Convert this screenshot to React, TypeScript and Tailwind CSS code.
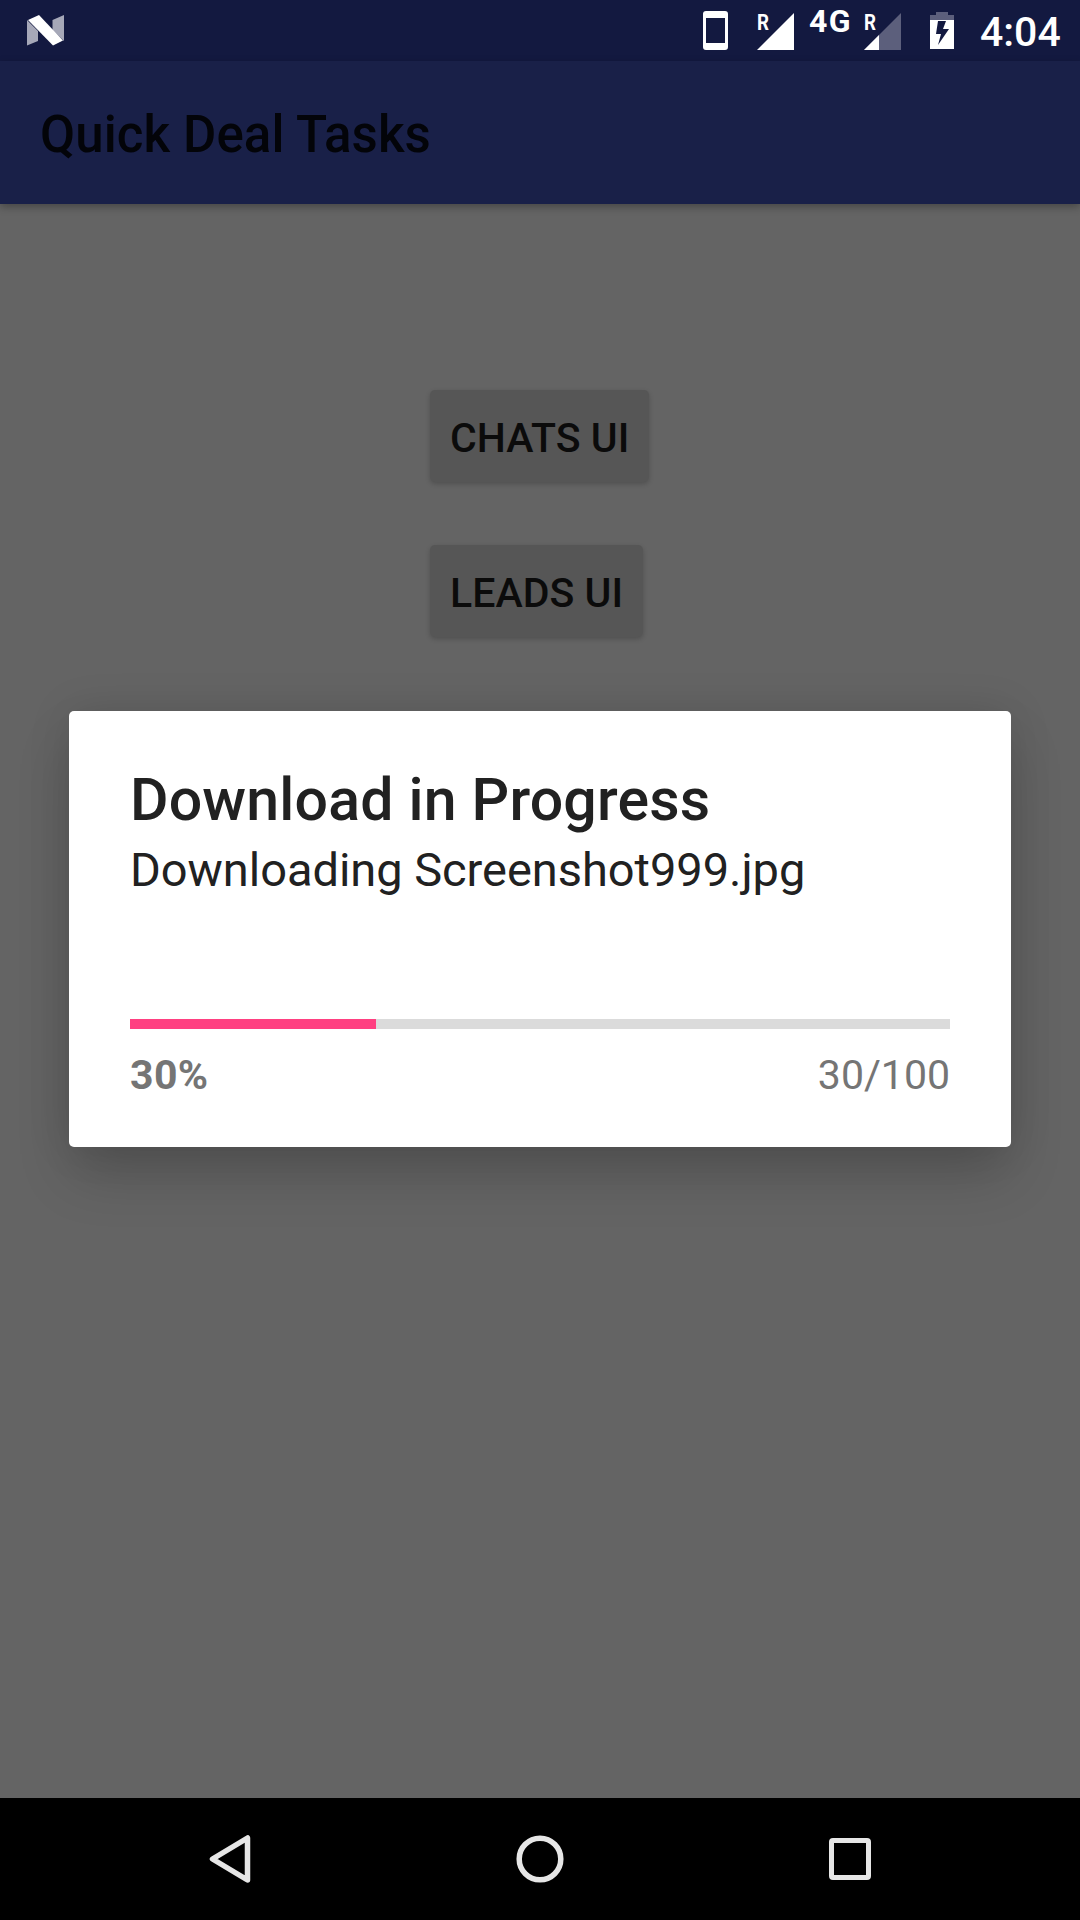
function StatusBar() {
  return (
    <div className="flex h-[61px] shrink-0 items-start bg-[#131940] text-white">
      <svg className="ml-[27px] mt-[15px] h-[31px] w-[37px]" viewBox="0 0 37 31">
        <path d="M0 5L11 16V26L0 30.5ZM25.500 5L37 0V26L25.500 15Z" fill="#a6a8b8" />
        <path d="M1 5L12 0L36 25.500L26 30.500Z" fill="#fff" />
      </svg>
      <svg className="ml-auto h-[61px] w-[100px]" viewBox="0 0 100 61">
        <path fillRule="evenodd" fill="#fff" d="M6 11H25Q28 11 28 14V47Q28 50 25 50H6Q3 50 3 47V14Q3 11 6 11ZM6 18V43H25V18Z" />
        <path d="M94 13V50H57Z" fill="#fff" />
        <text x="57" y="30" fontFamily="Roboto" fontWeight="700" fontSize="22" fill="#fff" textLength="12" lengthAdjust="spacingAndGlyphs">R</text>
      </svg>
      <span className="ml-[9px] w-[43px] text-[32px] font-bold leading-[42px] tracking-[1.5px]">4G</span>
      <svg className="ml-[12px] h-[61px] w-[37px] overflow-visible" viewBox="0 0 37 61">
        <path d="M37 13V50H0Z" fill="#5c5f7c" />
        <path d="M15 35V50H0Z" fill="#fff" />
        <text x="0" y="30" fontFamily="Roboto" fontWeight="700" fontSize="22" fill="#fff" textLength="12" lengthAdjust="spacingAndGlyphs">R</text>
      </svg>
      <svg className="ml-[29px] h-[61px] w-[24px]" viewBox="0 0 24 61">
        <path d="M0 15H6V12H18V15H24V20H0Z" fill="#5c5f7c" />
        <path fillRule="evenodd" d="M0 20H24V49H0ZM8 21L6 34H11L8 45L19 29H13L16 21Z" fill="#fff" />
      </svg>
      <span className="ml-[26px] w-[100px] text-[41px] font-medium leading-[64px]">4:04</span>
    </div>
  );
}

function NavBar() {
  return (
    <div className="flex h-[122px] shrink-0 items-center justify-between bg-black px-[199px]">
      <svg className="size-[62px]" viewBox="0 0 62 62" fill="none" stroke="#e6e6e6" strokeWidth="5.5" strokeLinejoin="round">
        <path d="M48.500 10V52L13.500 31Z" />
      </svg>
      <svg className="size-[62px]" viewBox="0 0 62 62" fill="none" stroke="#e6e6e6" strokeWidth="5.5">
        <circle cx="31" cy="31" r="20.800" />
      </svg>
      <svg className="size-[62px]" viewBox="0 0 62 62" fill="none" stroke="#e6e6e6" strokeWidth="5">
        <rect x="12.5" y="12.500" width="37" height="37" rx="1.5" />
      </svg>
    </div>
  );
}

function DownloadDialog({ file, done, total }: { file: string; done: number; total: number }) {
  const percent = Math.round((done / total) * 100);
  return (
    <div className="absolute left-[69px] top-[711px] h-[436px] w-[942px] rounded-[5px] bg-white px-[61px] pt-[54px] text-[#212121] shadow-[0_30px_56px_-4px_rgba(0,0,0,0.19),0_0_44px_rgba(0,0,0,0.1)]">
      <h2 className="text-[59px] font-medium leading-[70px] tracking-[0.18px] whitespace-nowrap">Download in Progress</h2>
      <p className="text-[47px] leading-[70px] tracking-[-0.04px] whitespace-nowrap">Downloading {file}</p>
      <div className="mt-[114px] h-[10px] bg-[#dbdbdb]">
        <div className="h-full bg-[#ff4081]" style={{ width: `${percent}%` }} />
      </div>
      <div className="mt-[22px] flex justify-between text-[41px] leading-[48px] text-[#757575]">
        <span className="font-bold tracking-[0.4px]">{percent}%</span>
        <span>{done}/{total}</span>
      </div>
    </div>
  );
}

function RaisedButton({ label }: { label: string }) {
  return (
    <button className="h-[92px] rounded-[5px] bg-[#565656] px-[20px] pt-[3px] text-[41px] font-medium leading-[48px] tracking-[0.05px] whitespace-nowrap text-[#0b0b0b] shadow-[0_2px_5px_rgba(0,0,0,0.2)]">
      {label}
    </button>
  );
}

export default function App() {
  return (
    <div className="relative flex h-[1920px] w-[1080px] flex-col overflow-hidden bg-[#646464] font-[Roboto,sans-serif]">
      <StatusBar />
      <header className="flex h-[143px] shrink-0 items-center bg-[#192048] pl-[40px] pt-[4px] shadow-[0_3px_8px_rgba(0,0,0,0.3)]">
        <h1 className="text-[51px] font-medium leading-[60px] tracking-[0.1px] text-[#030409]">Quick Deal Tasks</h1>
      </header>
      <main className="flex flex-1 flex-col items-start gap-[63px] pl-[430px] pt-[186px]">
        <RaisedButton label="CHATS UI" />
        <RaisedButton label="LEADS UI" />
      </main>
      <NavBar />
      <DownloadDialog file="Screenshot999.jpg" done={30} total={100} />
    </div>
  );
}
